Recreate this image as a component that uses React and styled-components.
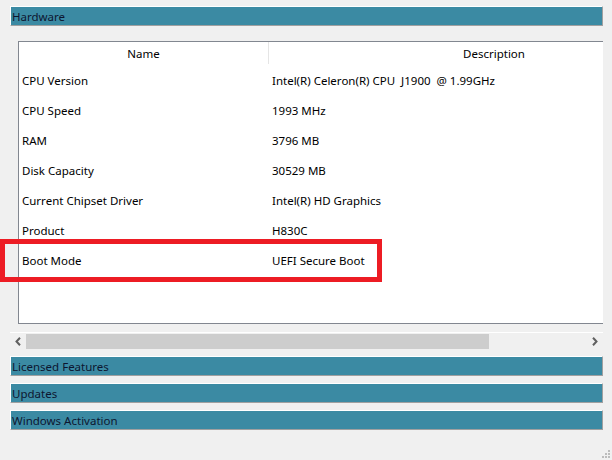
import React from "react";
import styled, { createGlobalStyle } from "styled-components";

const GlobalStyle = createGlobalStyle`
  html, body {
    margin: 0;
    padding: 0;
    background: #f0f0f0;
  }
  body {
    font-family: "Segoe UI", "Noto Sans", "Liberation Sans", sans-serif;
    font-size: 11.5px;
    color: #000;
  }
`;

const Page = styled.div`
  position: relative;
  width: 612px;
  height: 460px;
  box-sizing: border-box;
  padding: 6px 9px 0 10px;
  overflow: hidden;
`;

const SectionBar = styled.div`
  box-sizing: border-box;
  height: 20px;
  line-height: 19px;
  padding-left: 1px;
  background: #3b8aa3;
  border-top: 1px solid #ffffff;
  border-left: 1px solid #ffffff;
  border-bottom: 1px solid #a0a0a0;
  border-right: 1px solid #a0a0a0;
  color: #0d1630;
  white-space: nowrap;
  margin-top: ${(p) => p.gap || 0}px;
`;

const SectionBody = styled.div`
  padding: 15px 0 0 8px;
`;

const ListBox = styled.div`
  box-sizing: border-box;
  height: 283px;
  background: #fff;
  border-top: 1px solid #828790;
  border-left: 1px solid #828790;
  border-bottom: 1px solid #828790;
  overflow: hidden;
`;

const Table = styled.div`
  width: 700px;
`;

const HeaderRow = styled.div`
  display: grid;
  grid-template-columns: 249px 1px 450px;
  height: 23px;
  align-items: center;
`;

const HeaderCell = styled.div`
  text-align: center;
  line-height: 23px;
`;

const HeaderDivider = styled.div`
  align-self: start;
  height: 22px;
  background: #e5e5e5;
`;

const Row = styled.div`
  display: grid;
  grid-template-columns: 250px 450px;
  height: 30px;
  align-items: center;
`;

const Cell = styled.div`
  padding-left: 3px;
  white-space: pre;
`;

const Highlight = styled.div`
  position: absolute;
  left: 0;
  top: 239px;
  width: 382px;
  height: 43px;
  box-sizing: border-box;
  border: 5px solid #ed1c24;
  pointer-events: none;
`;

const ScrollBar = styled.div`
  display: flex;
  align-items: center;
  margin-top: 8px;
  height: 17px;
  box-sizing: border-box;
  border-top: 1px solid #ffffff;
  background: #f0f0f0;
`;

const Arrow = styled.div`
  width: 16px;
  height: 16px;
  display: flex;
  align-items: center;
  justify-content: center;
  flex: none;
`;

const Track = styled.div`
  flex: 1;
  height: 15px;
  display: flex;
  align-items: center;
`;

const Thumb = styled.div`
  height: 15px;
  background: #cdcdcd;
`;

const Grip = styled.svg`
  position: absolute;
  right: 2px;
  bottom: 2px;
`;

const rows = [
  ["CPU Version", "Intel(R) Celeron(R) CPU  J1900  @ 1.99GHz"],
  ["CPU Speed", "1993 MHz"],
  ["RAM", "3796 MB"],
  ["Disk Capacity", "30529 MB"],
  ["Current Chipset Driver", "Intel(R) HD Graphics"],
  ["Product", "H830C"],
  ["Boot Mode", "UEFI Secure Boot"],
];

const Chevron = ({ dir }) => (
  <svg width="8" height="9" viewBox="0 0 8 9">
    <path
      d={dir === "left" ? "M6 0.8 L2.5 4.5 L6 8.2" : "M2 0.8 L5.5 4.5 L2 8.2"}
      fill="none"
      stroke="#606060"
      strokeWidth="2"
    />
  </svg>
);

const App = () => (
  <Page>
    <GlobalStyle />
    <SectionBar>Hardware</SectionBar>
    <SectionBody>
      <ListBox>
        <Table>
          <HeaderRow>
            <HeaderCell>Name</HeaderCell>
            <HeaderDivider />
            <HeaderCell>Description</HeaderCell>
          </HeaderRow>
          {rows.map(([name, desc]) => (
            <Row key={name}>
              <Cell>{name}</Cell>
              <Cell>{desc}</Cell>
            </Row>
          ))}
        </Table>
      </ListBox>
    </SectionBody>
    <ScrollBar>
      <Arrow>
        <Chevron dir="left" />
      </Arrow>
      <Track>
        <Thumb style={{ width: 463 }} />
      </Track>
      <Arrow>
        <Chevron dir="right" />
      </Arrow>
    </ScrollBar>
    <SectionBar gap={7}>Licensed Features</SectionBar>
    <SectionBar gap={7}>Updates</SectionBar>
    <SectionBar gap={7}>Windows Activation</SectionBar>
    <Highlight />
    <Grip width="8" height="8" viewBox="0 0 8 8">
      <rect x="6" y="0" width="2" height="2" fill="#bcbcbc" />
      <rect x="3" y="3" width="2" height="2" fill="#bcbcbc" />
      <rect x="6" y="3" width="2" height="2" fill="#bcbcbc" />
      <rect x="0" y="6" width="2" height="2" fill="#bcbcbc" />
      <rect x="3" y="6" width="2" height="2" fill="#bcbcbc" />
      <rect x="6" y="6" width="2" height="2" fill="#bcbcbc" />
    </Grip>
  </Page>
);

export default App;
